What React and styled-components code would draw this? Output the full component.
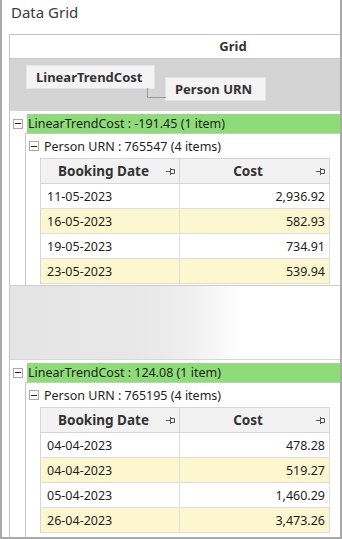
import React from 'react';
import styled, { createGlobalStyle } from 'styled-components';

const Global = createGlobalStyle`
  html, body { margin: 0; padding: 0; background: #fff; }
  body { font-family: "Noto Sans", "Open Sans", Arial, sans-serif; color: #222; }
  * { box-sizing: border-box; }
`;

const Frame = styled.div`
  width: 342px;
  height: 539px;
  border-left: 2px solid #a9a9a9;
  border-right: 2px solid #a9a9a9;
  border-bottom: 2px solid #a9a9a9;
  display: flex;
  flex-direction: column;
  overflow: hidden;
  background: #fff;
`;

const Title = styled.div`
  flex-shrink: 0;
  height: 34px;
  padding-left: 9px;
  font-size: 15px;
  line-height: 24px;
  color: #3b3b3b;
`;

const GridBox = styled.div`
  flex: 1;
  min-height: 0;
  margin-left: 7px;
  border-left: 1px solid #c4c4c4;
  border-top: 1px solid #c4c4c4;
  display: flex;
  flex-direction: column;
  overflow: hidden;
`;

const HeaderBar = styled.div`
  flex-shrink: 0;
  width: 446px;
  height: 24px;
  border-bottom: 1px solid #c8c8c8;
  text-align: center;
  font-size: 13px;
  font-weight: 700;
  line-height: 23px;
  color: #333;
`;

const GroupPanel = styled.div`
  flex-shrink: 0;
  height: 52px;
  background: #d4d4d4;
  padding: 6px 0 0 16px;
  display: flex;
  align-items: flex-start;
  gap: 10px;
`;

const Chip = styled.div`
  position: relative;
  width: ${(p) => p.$width}px;
  height: 24px;
  margin-top: ${(p) => p.$offset || 0}px;
  padding-left: 9px;
  background: #f4f4f4;
  border: 1px solid #e4e4e4;
  font-size: 13px;
  font-weight: 700;
  line-height: 22px;
  color: #333;
  white-space: nowrap;

  ${(p) =>
    p.$linked &&
    `
    &::before {
      content: '';
      position: absolute;
      left: -19px;
      top: 10px;
      width: 18px;
      height: 9px;
      border-left: 1px solid #9a9a9a;
      border-bottom: 1px solid #9a9a9a;
    }
  `}
`;

const GroupHeader = styled.div`
  flex-shrink: 0;
  display: flex;
  align-items: center;
  padding-top: 3px;
  height: 22px;
`;

const Expander = styled.span`
  flex-shrink: 0;
  position: relative;
  width: 10px;
  height: 10px;
  margin-left: 3px;
  border: 1px solid #a8a8a8;
  background: #fff;

  &::after {
    content: '';
    position: absolute;
    left: 1px;
    top: 3.5px;
    width: 6px;
    height: 1px;
    background: #222;
  }
`;

const GreenBar = styled.div`
  flex: 1;
  height: 19px;
  margin-left: 4px;
  padding-left: 1px;
  background: #8ddc78;
  font-size: 12.5px;
  line-height: 19px;
  color: #1e1e1e;
  white-space: nowrap;
`;

const Nested = styled.div`
  flex-shrink: 0;
  flex-grow: ${(p) => (p.$fill ? 1 : 0)};
  margin-left: 15px;
  border-left: 1px solid #c8c8c8;
  border-top: 1px solid #c8c8c8;
  padding-bottom: 1px;
`;

const SubHeader = styled.div`
  display: flex;
  align-items: center;
  height: 24px;
  font-size: 12.5px;
  color: #1e1e1e;
  white-space: nowrap;
`;

const SubLabel = styled.span`
  margin-left: 5px;
`;

const Table = styled.div`
  margin-left: 14px;
  width: 290px;
  display: grid;
  grid-template-columns: 139px 150px;
  border-left: 1px solid #d6d6d6;
  border-top: 1px solid #d6d6d6;
`;

const HeadCell = styled.div`
  height: 25px;
  display: flex;
  align-items: center;
  background: #f2f2f2;
  border-right: 1px solid #d6d6d6;
  border-bottom: 1px solid #d6d6d6;
  padding: 0 3px 0 0;
`;

const HeadText = styled.span`
  flex: 1;
  text-align: center;
  font-size: 13.5px;
  font-weight: 700;
  color: #333;
`;

const Cell = styled.div`
  height: 25px;
  display: flex;
  align-items: center;
  justify-content: ${(p) => (p.$right ? 'flex-end' : 'flex-start')};
  padding: ${(p) => (p.$right ? '0 4px 0 0' : '0 0 0 6px')};
  background: ${(p) => (p.$alt ? '#fcf7cf' : '#fff')};
  border-right: 1px solid #dedede;
  border-bottom: 1px solid #dedede;
  font-size: 12.5px;
  color: #1e1e1e;
`;

const Placeholder = styled.div`
  flex-shrink: 0;
  height: 75px;
  border-top: 1px solid #cdcdcd;
  border-bottom: 1px solid #d8d8d8;
  background: linear-gradient(90deg, #e4e4e4 0%, #e8e8e8 40%, #eeeeee 53%, #f8f8f8 63%, #ffffff 70%);
`;

const Pin = () => (
  <svg width="10" height="9" viewBox="0 0 10 9" aria-hidden="true">
    <path d="M0 4.5H4.5M4.5 1V8M4.5 2.5H8.5V6.5H4.5" stroke="#555" strokeWidth="1" fill="none" />
  </svg>
);

const groups = [
  {
    cost: '-191.45',
    urn: '765547',
    rows: [
      ['11-05-2023', '2,936.92'],
      ['16-05-2023', '582.93'],
      ['19-05-2023', '734.91'],
      ['23-05-2023', '539.94'],
    ],
  },
  {
    cost: '124.08',
    urn: '765195',
    rows: [
      ['04-04-2023', '478.28'],
      ['04-04-2023', '519.27'],
      ['05-04-2023', '1,460.29'],
      ['26-04-2023', '3,473.26'],
    ],
  },
];

const Group = ({ g, fill }) => (
  <>
    <GroupHeader>
      <Expander />
      <GreenBar>LinearTrendCost : {g.cost} (1 item)</GreenBar>
    </GroupHeader>
    <Nested $fill={fill}>
      <SubHeader>
        <Expander />
        <SubLabel>Person URN : {g.urn} (4 items)</SubLabel>
      </SubHeader>
      <Table>
        <HeadCell>
          <HeadText>Booking Date</HeadText>
          <Pin />
        </HeadCell>
        <HeadCell>
          <HeadText>Cost</HeadText>
          <Pin />
        </HeadCell>
        {g.rows.map(([d, c], i) => (
          <React.Fragment key={i}>
            <Cell $alt={i % 2 === 1}>{d}</Cell>
            <Cell $alt={i % 2 === 1} $right>
              {c}
            </Cell>
          </React.Fragment>
        ))}
      </Table>
    </Nested>
  </>
);

export default function App() {
  return (
    <>
      <Global />
      <Frame>
        <Title>Data Grid</Title>
        <GridBox>
          <HeaderBar>Grid</HeaderBar>
          <GroupPanel>
            <Chip $width={129}>LinearTrendCost</Chip>
            <Chip $width={101} $offset={12} $linked>
              Person URN
            </Chip>
          </GroupPanel>
          <Group g={groups[0]} />
          <Placeholder />
          <Group g={groups[1]} fill />
        </GridBox>
      </Frame>
    </>
  );
}
